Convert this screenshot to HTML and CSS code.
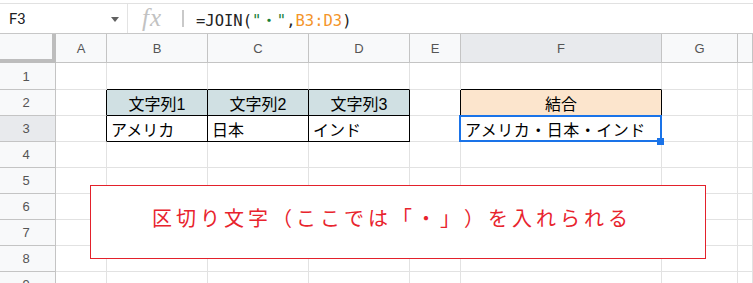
FILE: index.html
```html
<!DOCTYPE html>
<html lang="ja">
<head>
<meta charset="UTF-8">
<title>JOIN</title>
<link rel="stylesheet" href="styles.css">
</head>
<body>
<div class="page">

  <!-- 数式バー -->
  <div class="fbar">
    <div class="namebox">
      <span class="ref">F3</span>
      <span class="tri"></span>
    </div>
    <div class="fx">fx</div>
    <div class="sep"></div>
    <div class="formula">=JOIN(<span class="str">"・"</span>,<span class="rng">B3:D3</span>)</div>
  </div>

  <!-- シート -->
  <div class="sheet">
    <div class="corner"></div>
    <div class="hd">A</div><div class="hd">B</div><div class="hd">C</div><div class="hd">D</div>
    <div class="hd">E</div><div class="hd on">F</div><div class="hd">G</div><div class="hd"></div>

    <div class="rh">1</div>
    <div class="c"></div><div class="c bb"></div><div class="c bb"></div><div class="c bb"></div>
    <div class="c"></div><div class="c bb"></div><div class="c"></div><div class="c"></div>

    <div class="rh">2</div>
    <div class="c br"></div>
    <div class="c bb br hl ctr">文字列1</div>
    <div class="c bb br hl ctr">文字列2</div>
    <div class="c bb br hl ctr">文字列3</div>
    <div class="c br"></div>
    <div class="c bb br or ctr">結合</div>
    <div class="c"></div><div class="c"></div>

    <div class="rh on">3</div>
    <div class="c br"></div>
    <div class="c bb br">アメリカ</div>
    <div class="c bb br">日本</div>
    <div class="c bb br">インド</div>
    <div class="c br"></div>
    <div class="c bb br sel">アメリカ・日本・インド<span class="handle"></span></div>
    <div class="c"></div><div class="c"></div>

    <div class="rh">4</div>
    <div class="c"></div><div class="c"></div><div class="c"></div><div class="c"></div>
    <div class="c"></div><div class="c"></div><div class="c"></div><div class="c"></div>

    <div class="rh">5</div>
    <div class="c"></div><div class="c"></div><div class="c"></div><div class="c"></div>
    <div class="c"></div><div class="c"></div><div class="c"></div><div class="c"></div>

    <div class="rh">6</div>
    <div class="c"></div><div class="c"></div><div class="c"></div><div class="c"></div>
    <div class="c"></div><div class="c"></div><div class="c"></div><div class="c"></div>

    <div class="rh">7</div>
    <div class="c"></div><div class="c"></div><div class="c"></div><div class="c"></div>
    <div class="c"></div><div class="c"></div><div class="c"></div><div class="c"></div>

    <div class="rh">8</div>
    <div class="c"></div><div class="c"></div><div class="c"></div><div class="c"></div>
    <div class="c"></div><div class="c"></div><div class="c"></div><div class="c"></div>

    <div class="rh">9</div>
    <div class="c"></div><div class="c"></div><div class="c"></div><div class="c"></div>
    <div class="c"></div><div class="c"></div><div class="c"></div><div class="c"></div>
  </div>

  <!-- 注釈ボックス -->
  <div class="note">区切り文字（ここでは「・」）を入れられる</div>

</div>
</body>
</html>
```
FILE: styles.css
```css
/* ベース */
* {
  margin: 0;
  padding: 0;
  box-sizing: border-box;
}

body {
  background: #fff;
  color: #000;
  font-family: 'Liberation Sans', 'Noto Sans CJK JP', sans-serif;
  overflow: hidden;
}

.page {
  position: relative;
  width: 753px;
  height: 283px;
  overflow: hidden;
}

/* 数式バー */
.fbar {
  margin-top: 3px;
  height: 31px;
  border-top: 1px solid #e1e1e1;
  border-bottom: 1px solid #c7c7c7;
  display: flex;
  align-items: center;
}

.namebox {
  width: 128px;
  height: 100%;
  border-right: 1px solid #e3e3e3;
  display: flex;
  align-items: center;
  justify-content: space-between;
  padding: 0 8px 0 9px;
}

.ref {
  font-family: 'Roboto', 'Liberation Sans', sans-serif;
  font-size: 15px;
  color: #202124;
}

.tri {
  width: 0;
  height: 0;
  border-left: 4px solid transparent;
  border-right: 4px solid transparent;
  border-top: 5px solid #616161;
  margin-top: 2px;
}

.fx {
  width: 54px;
  padding-left: 14px;
  font-family: 'Liberation Serif', serif;
  font-style: italic;
  font-size: 25px;
  letter-spacing: 1px;
  color: #c2c2c2;
  line-height: 1;
  margin-top: -2px;
}

.sep {
  width: 2px;
  height: 17px;
  background: #c9c9c9;
  margin-right: 12px;
}

.formula {
  font-family: 'DejaVu Sans Mono', 'Noto Sans CJK JP', monospace;
  font-size: 15.5px;
  color: #222;
  margin-top: 1px;
}
.formula .str { color: #188038; }
.formula .rng { color: #f4952a; }

/* シート */
.sheet {
  display: grid;
  grid-template-columns: 56px 51px 101px 101px 101px 51px 201px 76px 1fr;
  grid-template-rows: 29px 27px repeat(8, 26px);
}

.corner {
  background: #f8f9fa;
  border-right: 4px solid #bdbdbd;
  border-bottom: 4px solid #bdbdbd;
}

.hd {
  background: #f8f9fa;
  border-right: 1px solid #c4c4c4;
  border-bottom: 1px solid #c4c4c4;
  display: flex;
  align-items: center;
  justify-content: center;
  font-size: 13px;
  color: #555;
}

.rh {
  background: #f8f9fa;
  border-right: 1px solid #c4c4c4;
  border-bottom: 1px solid #c4c4c4;
  display: flex;
  align-items: center;
  justify-content: center;
  font-size: 13px;
  color: #555;
  padding-right: 3px;
}

.hd.on, .rh.on {
  background: #e8eaed;
}

.c {
  position: relative;
  border-right: 1px solid #e2e2e2;
  border-bottom: 1px solid #e2e2e2;
  display: flex;
  align-items: center;
  padding: 0 4px;
  font-size: 16px;
  white-space: nowrap;
}

.c.bb { border-bottom-color: #000; }
.c.br { border-right-color: #000; }
.c.ctr { justify-content: center; }
.c.hl { background: #d0e0e3; }
.c.or { background: #fce5cd; }

/* 選択セル */
.c.sel {
  letter-spacing: 0.5px;
}
.c.sel::after {
  content: "";
  position: absolute;
  top: -1px; left: -2px; right: -1px; bottom: -1px;
  border: 2px solid #1a73e8;
}

.handle {
  position: absolute;
  right: -3px;
  bottom: -4px;
  width: 7px;
  height: 7px;
  background: #1a73e8;
  z-index: 2;
}

/* 注釈ボックス */
.note {
  position: absolute;
  top: 185px;
  left: 90px;
  width: 616px;
  height: 74px;
  background: #fff;
  border: 1px solid #e3212b;
  padding: 17px 0 0 61px;
  font-family: 'Noto Sans CJK JP', sans-serif;
  font-size: 20px;
  line-height: 30px;
  letter-spacing: 4px;
  text-spacing-trim: space-all;
  color: #e8232d;
}
```
